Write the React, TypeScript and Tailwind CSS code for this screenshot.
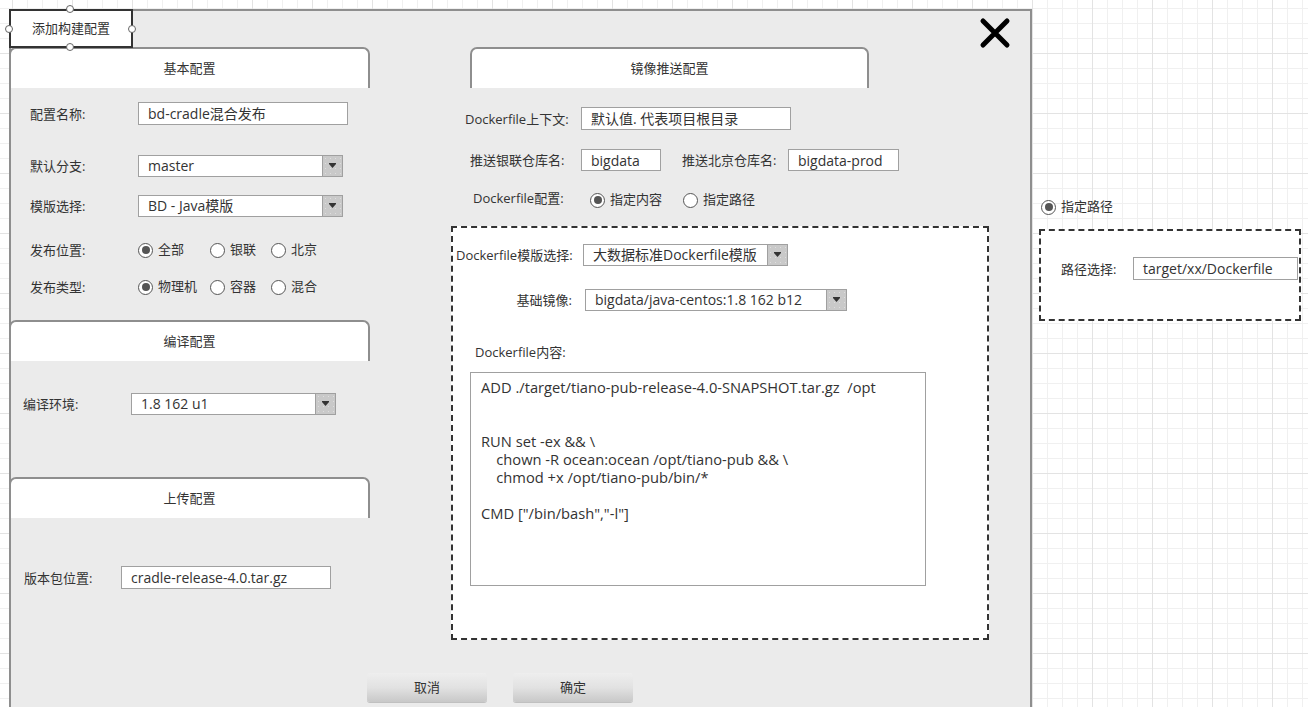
import React from 'react';

const Label = ({ children, className = '' }: { children: React.ReactNode; className?: string }) => (
  <div className={`shrink-0 text-[13px] leading-[20px] text-[#333] whitespace-nowrap ${className}`}>{children}</div>
);

const TextBox = ({ value, className = '' }: { value: string; className?: string }) => (
  <div className={`shrink-0 border border-[#a0a0a0] bg-white pl-[9px] text-[14px] text-[#333] whitespace-nowrap overflow-hidden flex items-center ${className}`}>
    {value}
  </div>
);

const Select = ({ value, className = '' }: { value: string; className?: string }) => (
  <div className={`shrink-0 flex h-[22px] border border-[#a0a0a0] bg-white ${className}`}>
    <div className="flex-1 pl-[9px] text-[14px] leading-[20px] text-[#333] whitespace-pre overflow-hidden">{value}</div>
    <div className="w-[20px] border-l border-[#a0a0a0] bg-[#c9c9c9] bg-[image:radial-gradient(#dedede_0.5px,transparent_0.8px)] bg-[size:5px_5px] flex justify-center pt-[7px]">
      <svg width="7" height="5" viewBox="0 0 7 5">
        <path d="M0 0 H7 V1 L3.5 5 L0 1 Z" fill="#333" />
      </svg>
    </div>
  </div>
);

const Radio = ({ checked = false }: { checked?: boolean }) => (
  <span className="shrink-0 w-[15px] h-[15px] rounded-full border-[1.5px] border-[#555] bg-white flex items-center justify-center">
    {checked && <span className="w-[8px] h-[8px] rounded-full bg-[#555]" />}
  </span>
);

const Option = ({ label, checked, className = '' }: { label: string; checked?: boolean; className?: string }) => (
  <div className={`shrink-0 flex items-center gap-[5px] ${className}`}>
    <Radio checked={checked} />
    <span className="text-[13px] text-[#333] whitespace-nowrap">{label}</span>
  </div>
);

const Tab = ({ title, className = '' }: { title: string; className?: string }) => (
  <div className={`shrink-0 h-[41px] rounded-t-[7px] border-2 border-b-0 border-[#8e8e8e] bg-white flex items-center justify-center text-[13px] text-[#333] ${className}`}>
    {title}
  </div>
);

const Button = ({ children }: { children: React.ReactNode }) => (
  <div className="w-[120px] h-[29px] rounded-[3px] bg-linear-to-b from-[#eeeeee] via-[#e2e2e2] to-[#c8c8c8] shadow-[0_1px_0_#c0c0c0] flex items-center justify-center text-[13px] text-[#333]">
    {children}
  </div>
);

const dockerfile = `ADD ./target/tiano-pub-release-4.0-SNAPSHOT.tar.gz  /opt


RUN set -ex && \\
    chown -R ocean:ocean /opt/tiano-pub && \\
    chmod +x /opt/tiano-pub/bin/*

CMD ["/bin/bash","-l"]`;

export default function App() {
  return (
    <div className="relative w-[1308px] h-[707px] overflow-hidden flex items-start bg-white bg-[image:linear-gradient(to_right,#e3e3e3_1px,transparent_1px),linear-gradient(to_bottom,#e3e3e3_1px,transparent_1px),linear-gradient(to_right,#f0f0f0_1px,transparent_1px),linear-gradient(to_bottom,#f0f0f0_1px,transparent_1px)] bg-[size:60px_60px,60px_60px,15px_15px,15px_15px] bg-[position:12px_0,0_53px,12px_0,0_8px] font-['Open_Sans','Noto_Sans_CJK_SC',sans-serif]">
      {/* dialog */}
      <div className="relative ml-[9px] mt-[9px] w-[1023px] h-[720px] shrink-0 border-2 border-[#8e8e8e] bg-[#ebebeb] flex flex-col">
        <div className="flex items-start mt-[36px]">
          {/* left column */}
          <div className="-ml-[2px] w-[361px] shrink-0 flex flex-col">
            <Tab title="基本配置" />
            <div className="mt-[14px] h-[23px] flex items-center pl-[21px]">
              <Label className="w-[108px]">配置名称:</Label>
              <TextBox value="bd-cradle混合发布" className="w-[210px] h-[23px]" />
            </div>
            <div className="mt-[30px] h-[22px] flex items-center pl-[21px]">
              <Label className="w-[108px]">默认分支:</Label>
              <Select value="master" className="w-[205px]" />
            </div>
            <div className="mt-[18px] h-[22px] flex items-center pl-[21px]">
              <Label className="w-[108px]">模版选择:</Label>
              <Select value="BD - Java模版" className="w-[205px]" />
            </div>
            <div className="mt-[23px] h-[20px] flex items-center pl-[21px]">
              <Label className="w-[108px]">发布位置:</Label>
              <Option label="全部" checked className="w-[72px]" />
              <Option label="银联" className="w-[61px]" />
              <Option label="北京" />
            </div>
            <div className="mt-[17px] h-[20px] flex items-center pl-[21px]">
              <Label className="w-[108px]">发布类型:</Label>
              <Option label="物理机" checked className="w-[72px]" />
              <Option label="容器" className="w-[61px]" />
              <Option label="混合" />
            </div>

            <Tab title="编译配置" className="mt-[23px]" />
            <div className="mt-[32px] h-[22px] flex items-center pl-[14px]">
              <Label className="w-[108px]">编译环境:</Label>
              <Select value="1.8 162 u1" className="w-[205px]" />
            </div>

            <Tab title="上传配置" className="mt-[62px]" />
            <div className="mt-[48px] h-[23px] flex items-center pl-[15px]">
              <Label className="w-[97px]">版本包位置:</Label>
              <TextBox value="cradle-release-4.0.tar.gz" className="w-[210px] h-[23px]" />
            </div>
          </div>

          {/* right column */}
          <div className="ml-[81px] w-[538px] shrink-0 flex flex-col">
            <Tab title="镜像推送配置" className="ml-[19px] w-[399px]" />
            <div className="mt-[19px] h-[23px] flex items-center pl-[14px]">
              <Label className="w-[116px]">Dockerfile上下文:</Label>
              <TextBox value="默认值. 代表项目根目录" className="w-[210px] h-[23px]" />
            </div>
            <div className="mt-[19px] h-[22px] flex items-center pl-[19px]">
              <Label className="w-[111px]">推送银联仓库名:</Label>
              <TextBox value="bigdata" className="w-[80px] h-[22px]" />
              <Label className="ml-[21px] w-[106px]">推送北京仓库名:</Label>
              <TextBox value="bigdata-prod" className="w-[111px] h-[22px]" />
            </div>
            <div className="mt-[19px] h-[20px] flex items-center pl-[22px]">
              <Label className="w-[117px] -mt-[5px]">Dockerfile配置:</Label>
              <Option label="指定内容" checked className="w-[93px]" />
              <Option label="指定路径" />
            </div>

            {/* dockerfile content box */}
            <div className="mt-[16px] h-[414px] border-2 border-dashed border-[#333] bg-white flex flex-col">
              <div className="mt-[16px] h-[22px] flex items-center pl-[3px]">
                <Label className="w-[127px]">Dockerfile模版选择:</Label>
                <Select value="大数据标准Dockerfile模版" className="w-[205px]" />
              </div>
              <div className="mt-[23px] h-[22px] flex items-center">
                <Label className="w-[132px] text-right pr-[13px]">基础镜像:</Label>
                <Select value="bigdata/java-centos:1.8 162 b12" className="w-[262px]" />
              </div>
              <Label className="mt-[31px] pl-[22px]">Dockerfile内容:</Label>
              <div className="ml-[17px] mt-[10px] w-[456px] h-[214px] border border-[#a0a0a0] bg-white pl-[10px] pt-[5px] text-[14.7px] leading-[18px] text-[#333] whitespace-pre overflow-hidden">
                {dockerfile}
              </div>
            </div>
          </div>
        </div>

        <div className="mt-[33px] pl-[356px] flex gap-[26px]">
          <Button>取消</Button>
          <Button>确定</Button>
        </div>

        {/* close icon */}
        <svg className="absolute left-[968px] top-[6px]" width="32" height="32" viewBox="0 0 32 32">
          <path d="M4 4 L28 28 M28 4 L4 28" stroke="#000" strokeWidth="5" strokeLinecap="round" />
        </svg>
      </div>

      {/* title widget with selection handles */}
      <div className="absolute left-[9px] top-[9px] w-[124px] h-[39px] border-2 border-[#333] bg-white flex items-center justify-center text-[13px] text-[#333]">
        添加构建配置
        <span className="absolute left-[55px] -top-[6px] w-[8px] h-[8px] rounded-full border border-[#666] bg-white" />
        <span className="absolute -left-[6px] top-[14px] w-[8px] h-[8px] rounded-full border border-[#666] bg-white" />
        <span className="absolute left-[117px] top-[14px] w-[8px] h-[8px] rounded-full border border-[#666] bg-white" />
        <span className="absolute left-[55px] top-[32px] w-[8px] h-[8px] rounded-full border border-[#666] bg-white" />
      </div>

      {/* path option panel */}
      <div className="ml-[7px] mt-[197px] w-[262px] shrink-0 flex flex-col">
        <div className="h-[20px] flex items-center pl-[2px]">
          <Option label="指定路径" checked />
        </div>
        <div className="mt-[12px] h-[92px] border-2 border-dashed border-[#333] bg-white flex items-center">
          <Label className="pl-[20px] w-[92px] -mt-[13px]">路径选择:</Label>
          <TextBox value="target/xx/Dockerfile" className="w-[165px] h-[23px] -mt-[13px]" />
        </div>
      </div>
    </div>
  );
}
